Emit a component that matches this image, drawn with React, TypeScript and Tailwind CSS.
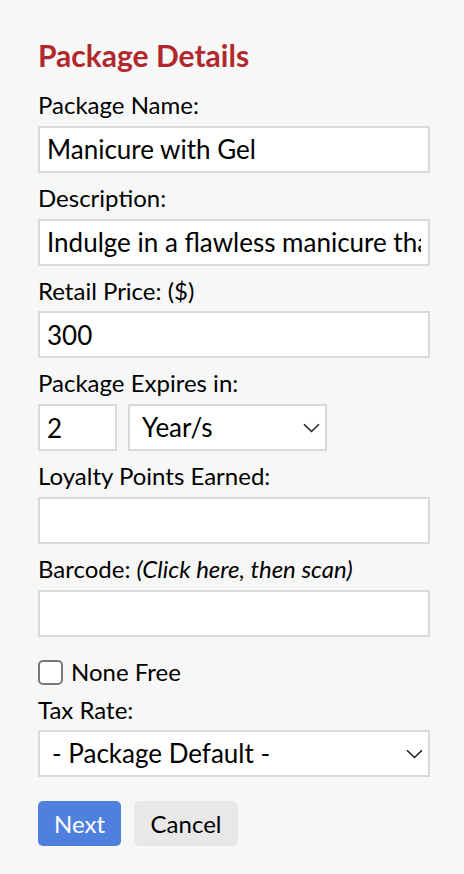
import { useState } from 'react';

function Chevron() {
  return (
    <svg
      className="pointer-events-none absolute right-[7px] top-1/2 -translate-y-1/2"
      width="17"
      height="10"
      viewBox="0 0 17 10"
      fill="none"
    >
      <path d="M1 1.2L8.5 8.5L16 1.2" stroke="#222" strokeWidth="1.6" />
    </svg>
  );
}

const label = 'block text-[24px] leading-[1.2] text-black mb-[6px]';
const input =
  'block w-full h-[47px] border-2 border-[#d9d9d9] bg-white px-[7px] text-[26px] text-black outline-none';

export default function App() {
  const [name, setName] = useState('Manicure with Gel');
  const [desc, setDesc] = useState(
    'Indulge in a flawless manicure that lasts for weeks with our gel polish treatment.'
  );
  const [price, setPrice] = useState('300');
  const [expires, setExpires] = useState('2');

  return (
    <main
      className="min-h-screen bg-[#f7f7f7] px-[38px] pt-[37px] pb-8"
      style={{ fontFamily: 'Lato, "Noto Sans", sans-serif' }}
    >
      <h1 className="text-[30px] leading-[1.2] font-bold text-[#b0282c] mb-[18px]">
        Package Details
      </h1>

      <div className="w-[392px]">
        <label className={label}>Package Name:</label>
        <input className={input} value={name} onChange={(e) => setName(e.target.value)} />

        <label className={`${label} mt-[11px]`}>Description:</label>
        <input className={input} value={desc} onChange={(e) => setDesc(e.target.value)} />

        <label className={`${label} mt-[11px]`}>Retail Price: ($)</label>
        <input className={input} value={price} onChange={(e) => setPrice(e.target.value)} />

        <label className={`${label} mt-[11px]`}>Package Expires in:</label>
        <div className="flex gap-[11px]">
          <input
            className="block w-[79px] h-[47px] border-2 border-[#d9d9d9] bg-white px-[7px] text-[26px] text-black outline-none"
            value={expires}
            onChange={(e) => setExpires(e.target.value)}
          />
          <div className="relative w-[199px]">
            <select
              defaultValue="year"
              className="block w-full h-[47px] appearance-none border-2 border-[#d9d9d9] bg-white pl-[12px] text-[26px] text-black outline-none"
            >
              <option value="day">Day/s</option>
              <option value="month">Month/s</option>
              <option value="year">Year/s</option>
            </select>
            <Chevron />
          </div>
        </div>

        <label className={`${label} mt-[11px]`}>Loyalty Points Earned:</label>
        <input className={input} />

        <label className={`${label} mt-[11px]`}>
          Barcode: <em>(Click here, then scan)</em>
        </label>
        <input className={input} />

        <label className="mt-[21px] flex items-center gap-[8px] text-[24px] leading-[1.2] text-black">
          <input
            type="checkbox"
            className="h-[25px] w-[25px] appearance-none rounded-[5px] border-2 border-[#777] bg-white"
          />
          None Free
        </label>

        <label className={`${label} mt-[9px]`}>Tax Rate:</label>
        <div className="relative">
          <select
            defaultValue="default"
            className="block w-full h-[47px] appearance-none border-2 border-[#d9d9d9] bg-white pl-[12px] text-[26px] text-black outline-none"
          >
            <option value="default">- Package Default -</option>
            <option value="none">No Tax</option>
          </select>
          <Chevron />
        </div>

        <div className="mt-[24px] flex gap-[13px]">
          <button className="h-[45px] w-[83px] rounded-[5px] bg-[#4f80de] text-[24px] text-white">
            Next
          </button>
          <button className="h-[45px] w-[104px] rounded-[5px] bg-[#e8e8e8] text-[24px] text-black">
            Cancel
          </button>
        </div>
      </div>
    </main>
  );
}
